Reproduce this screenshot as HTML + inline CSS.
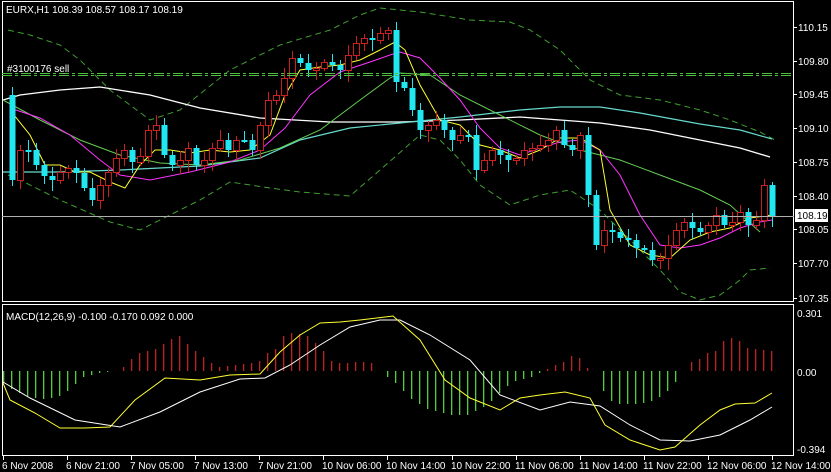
<!DOCTYPE html>
<html><head><meta charset="utf-8">
<style>
html,body{margin:0;padding:0;background:#000;width:831px;height:472px;overflow:hidden}
svg{display:block}
text{font-family:"Liberation Sans",sans-serif;font-size:10px;fill:#fff}
</style></head>
<body>
<svg id="s" width="831" height="472" xmlns="http://www.w3.org/2000/svg">
<rect width="831" height="472" fill="#000"/>
<g id="g"></g>
<rect x="2.5" y="1.5" width="791" height="300" fill="none" stroke="#fff" stroke-width="1"/>
<rect x="2.5" y="304.5" width="791" height="151" fill="none" stroke="#fff" stroke-width="1"/>
<line x1="2" y1="216.5" x2="794" y2="216.5" stroke="#b0b0b0" stroke-width="1"/>
<line x1="2" y1="73.5" x2="793" y2="73.5" stroke="#4fbf3f" stroke-width="1" stroke-dasharray="10,3,3,3"/>
<line x1="2" y1="75.5" x2="793" y2="75.5" stroke="#4fbf3f" stroke-width="1" stroke-dasharray="10,3,3,3"/>
<text x="7" y="72">#3100176 sell</text>
<text x="6" y="13">EURX,H1  108.39 108.57 108.17 108.19</text>
<text x="6" y="320">MACD(12,26,9) -0.100 -0.170 0.092 0.000</text>
<g id="ax"></g>
<rect x="795" y="209" width="33" height="13" fill="#fff"/>
<text x="797" y="219" style="fill:#000">108.19</text>
</svg>
<script>
(function(){
var g=document.getElementById('g'),ax=document.getElementById('ax');
var NS='http://www.w3.org/2000/svg';
function el(p,t,a,txt){var e=document.createElementNS(NS,t);for(var k in a)e.setAttribute(k,a[k]);if(txt)e.textContent=txt;p.appendChild(e);return e;}
function pl(pts,c,w,d){var s='';for(var i=0;i<pts.length;i+=2)s+=pts[i]+','+pts[i+1]+' ';var a={points:s,fill:'none',stroke:c,'stroke-width':w||1};if(d)a['stroke-dasharray']=d;el(g,'polyline',a);}
pl([8,30,30,35,60,45,80,60,110,90,150,120,180,110,230,70,280,45,330,30,360,15,380,8,420,12,470,20,510,22,530,30,560,50,590,80,620,95,660,100,700,110,730,120,760,132,775,140],'#3f9f2f',1,'6,4');
pl([8,175,20,180,60,200,110,222,140,230,170,215,200,200,230,182,270,188,300,192,350,196,380,170,420,135,440,140,460,160,480,185,510,205,540,195,570,190,600,210,630,240,660,270,680,292,700,300,720,295,740,280,750,270,770,268],'#3f9f2f',1,'6,4');
pl([3,100,20,95,60,90,100,87,150,95,200,108,260,118,330,122,400,122,460,120,520,117,560,120,600,123,650,130,700,140,740,148,770,157],'#ffffff',1.3);
pl([3,172,60,172,120,170,200,166,260,158,300,140,350,128,400,123,460,117,520,110,560,107,600,107,640,113,700,124,740,130,772,139],'#66d9cc',1.2);
pl([3,100,40,120,80,140,120,155,160,163,200,165,240,160,280,148,320,130,360,100,390,78,400,73,430,75,460,95,500,115,540,135,580,150,620,160,660,175,700,190,730,205,760,232],'#66cc55',1);
pl([10,108,40,118,70,135,100,160,120,175,150,180,190,172,230,162,260,150,285,128,310,95,340,72,370,62,390,55,400,52,420,58,440,78,460,100,480,128,500,148,520,155,540,148,560,142,580,140,600,150,620,175,640,215,660,245,680,248,700,245,720,238,740,228,760,222,772,220],'#ff33ff',1);
pl([10,110,30,135,45,165,60,165,75,172,90,172,110,182,125,188,140,165,155,150,170,150,190,153,210,150,230,152,250,150,270,135,285,95,300,70,320,67,340,65,360,60,380,50,395,42,405,50,420,85,440,120,460,125,480,145,500,150,520,158,540,150,560,138,580,138,600,150,610,210,630,245,650,255,670,258,690,240,710,232,730,228,750,218,772,215],'#ffff33',1);
var ys=[95,180,150,150,165,176,180,172,168,173,188,200,185,172,158,150,162,156,130,125,155,165,160,148,165,160,148,140,150,140,140,150,125,100,95,78,58,63,70,68,62,65,70,55,43,38,40,33,30,82,88,110,130,125,120,130,140,135,135,170,160,150,155,160,158,150,148,145,140,130,145,150,135,195,245,230,232,238,240,248,250,260,258,245,230,222,228,232,225,215,225,222,212,225,220,185,216];
for(var i=1;i<ys.length;i++){var x=4+i*8,o=ys[i-1],c=ys[i];var t0=Math.min(o,c),b0=Math.max(o,c);
 var hw=3+((i*37)%8),lw=3+((i*53)%10);
 var up=c<o; var col=up?'#cc1f1f':'#22e6f0';
 el(g,'line',{x1:x+.5,y1:t0-hw,x2:x+.5,y2:b0+lw,stroke:col,'stroke-width':1});
 if(b0-t0<2){b0=t0+2;}
 if(up) el(g,'rect',{x:x-2.5,y:t0+.5,width:6,height:b0-t0,fill:'#000',stroke:col,'stroke-width':1});
 else el(g,'rect',{x:x-2.5,y:t0,width:6,height:b0-t0,fill:col});
}
var h=[-12,-18,-22,-25,-27,-28,-27,-25,-20,-13,-6,-4,-2,-1,0,4,12,18,20,22,27,32,35,27,20,14,8,4,5,6,7,8,10,18,22,35,38,37,35,28,20,10,8,8,9,9,8,0,-6,-12,-20,-28,-33,-38,-40,-42,-44,-44,-44,-40,-36,-30,-22,-15,-10,-8,-6,-2,2,6,9,15,13,3,0,-20,-30,-33,-33,-33,-32,-30,-26,-20,-11,0,9,12,18,20,30,33,30,23,22,21,20];
for(var i=0;i<h.length;i++){var x=3+i*8,v=h[i];if(v==0)continue;
 el(g,'rect',{x:x,y:v>0?371-v:371,width:1.3,height:Math.abs(v),fill:v>0?'#c41f1f':'#55cc44'});}
pl([3,382,30,398,75,420,120,427,160,412,200,392,240,379,265,378,290,365,320,345,350,327,380,320,400,320,430,335,470,360,500,395,540,410,570,402,600,406,630,425,660,440,690,441,720,435,750,420,772,407],'#ffffff',1);
pl([3,383,10,400,35,413,60,428,85,428,110,427,135,400,165,378,200,380,230,375,260,374,280,352,300,335,320,323,340,322,360,320,393,316,420,340,445,380,470,398,500,410,520,398,540,395,565,392,590,398,605,425,630,440,660,450,675,447,700,425,720,410,735,404,755,403,772,393],'#ffff33',1);
var pr=[['110.15',27],['109.80',61],['109.45',94],['109.10',128],['108.75',162],['108.40',196],['108.05',229],['107.70',263],['107.35',298]];
pr.forEach(function(p){el(ax,'line',{x1:794,y1:p[1]+.5,x2:797,y2:p[1]+.5,stroke:'#fff'});el(ax,'text',{x:798,y:p[1]+4},p[0]);});
[['0.301',313],['0.00',372],['-0.394',449]].forEach(function(p){el(ax,'text',{x:797,y:p[1]+4},p[0]);});
var tl=['6 Nov 2008','6 Nov 21:00','7 Nov 05:00','7 Nov 13:00','7 Nov 21:00','10 Nov 06:00','10 Nov 14:00','10 Nov 22:00','11 Nov 06:00','11 Nov 14:00','11 Nov 22:00','12 Nov 06:00','12 Nov 14:00'];
var tx=[3,67,131,195,259,323,387,452,516,580,644,708,772];
for(var i=0;i<tl.length;i++){el(ax,'line',{x1:tx[i]+.5,y1:456,x2:tx[i]+.5,y2:460,stroke:'#fff'});el(ax,'text',{x:i==0?2:tx[i]-1,y:469},tl[i]);}
})();
</script>
</body></html>
